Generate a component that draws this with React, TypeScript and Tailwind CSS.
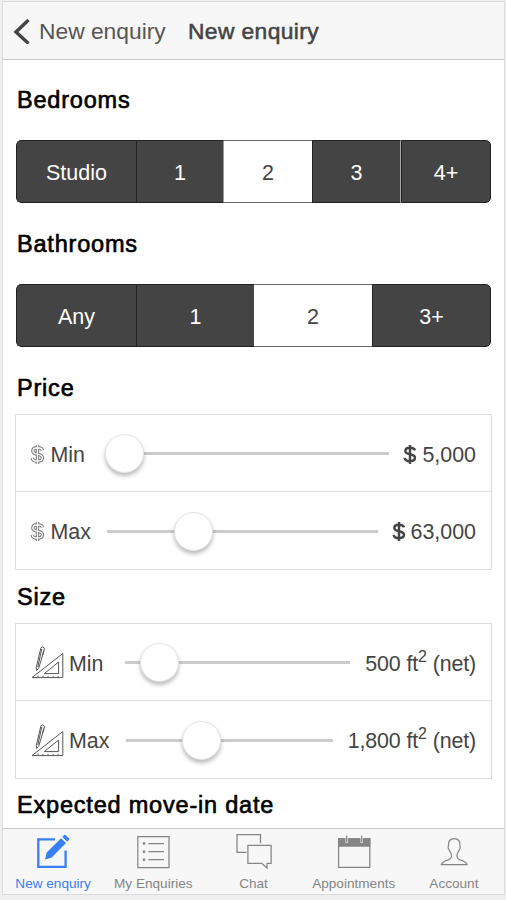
import type { ReactNode } from 'react';

function Heading({ children, className }: { children: ReactNode; className: string }) {
  return (
    <h2
      className={`shrink-0 whitespace-nowrap pl-[14px] text-[23.5px] leading-[30px] tracking-[0.8px] text-black [-webkit-text-stroke:0.65px_#000] ${className}`}
    >
      {children}
    </h2>
  );
}

type Segment = { label: string; width: string; active?: boolean };

function Segments({ items, className }: { items: Segment[]; className: string }) {
  return (
    <div className={`ml-[13px] flex h-[63px] w-[475px] shrink-0 overflow-hidden rounded-[5px] text-[21.5px] ${className}`}>
      {items.map((s, i) => (
        <button
          key={s.label}
          className={`flex items-center justify-center border-y pt-[3px] ${s.width} ${
            s.active ? 'border-[#666] bg-white text-[#444]' : 'border-[#222] bg-[#444] text-white'
          } ${i === 0 ? 'rounded-l-[5px] border-l' : ''} ${i === items.length - 1 ? 'rounded-r-[5px] border-r' : ''} ${
            i > 0 && !s.active ? 'border-l' : ''
          }`}
        >
          {s.label}
        </button>
      ))}
    </div>
  );
}

const dollarPath = 'M12 6.2C11.6 4.4 9.8 3.6 7.2 3.6C4.6 3.6 2.7 4.6 2.7 6.7C2.7 8.7 4.5 9.4 7.2 9.9C10 10.4 12 11.2 12 13.4C12 15.6 9.9 16.7 7.2 16.7C4.3 16.7 2.3 15.6 2.1 13.5M7.2 1V19.4';

function OutlineDollar() {
  return (
    <svg className="mt-[2px] h-[21px] w-[15px] shrink-0" viewBox="0 0 14.4 20.4" fill="none">
      <path d={dollarPath} stroke="#777" strokeWidth="3.3" />
      <path d={dollarPath} stroke="#fff" strokeWidth="1.3" />
    </svg>
  );
}

function SolidDollar() {
  return (
    <svg className="mr-[4px] -mt-px h-[21px] w-[16px] shrink-0" viewBox="0 0 14.4 20.4" fill="none">
      <path d={dollarPath} stroke="#444" strokeWidth="2.4" />
    </svg>
  );
}

function RulerIcon() {
  return (
    <svg className="h-[34px] w-[34px] shrink-0" viewBox="30 644 34 34" fill="none" stroke="#555" strokeWidth="1">
      <path d="M32 676.6L62.8 652.5V676.6Z" />
      <path d="M44.3 672.6L58.6 661V672.6Z" />
      <path d="M38 676.5v-2M43 676.5v-1.6M48 676.5v-1.6M53 676.5v-1.6M58 676.5v-1.6" />
      <path d="M36.3 666.5L40.8 647.2Q41.5 645.3 43.2 646Q44.8 646.8 44.2 649L38.6 667.5L36.5 669.5Z" />
      <path d="M41.8 648L37.8 666M43.9 649.5L42.6 654" />
    </svg>
  );
}

type SliderProps = { track: string; offset: string };

function Slider({ track, offset }: SliderProps) {
  return (
    <div className={`relative mt-px flex h-[39px] shrink-0 items-center ${track}`}>
      <div className="h-[3px] w-full bg-[#cbcbcb]" />
      <div
        className={`absolute top-0 size-[39px] rounded-full border border-[#e4e4e4] bg-white shadow-[0_3px_4px_rgba(0,0,0,0.27)] ${offset}`}
      />
    </div>
  );
}

function Row({ icon, label, value, ...slider }: { icon: ReactNode; label: ReactNode; value: ReactNode } & SliderProps) {
  return (
    <div className="flex h-[77px] items-center pl-[14px] pr-[15px] text-[21.4px] text-[#444]">
      {icon}
      {label}
      <Slider {...slider} />
      <div className="ml-auto flex items-center whitespace-nowrap pt-[4px]">{value}</div>
    </div>
  );
}

function Area({ amount }: { amount: string }) {
  return (
    <span className="tracking-[-0.13px]">
      {amount} ft<span className="relative -top-[9px] text-[16px] leading-none">2</span> (net)
    </span>
  );
}

function Card({ children, className }: { children: ReactNode; className: string }) {
  return (
    <div
      className={`ml-3 h-[156px] w-[477px] shrink-0 divide-y divide-[#ddd] border border-[#ddd] ${className}`}
    >
      {children}
    </div>
  );
}

function Tab({ label, view, active, children }: { label: string; view: string; active?: boolean; children: ReactNode }) {
  return (
    <button className={`flex flex-1 flex-col items-center pt-[3px] ${active ? 'text-[#387ef5]' : 'text-[#858585]'}`}>
      <svg className="h-[38px] w-10" viewBox={view} fill="none" stroke="currentColor" strokeWidth="1.25">
        {children}
      </svg>
      <span className="mt-[4px] whitespace-nowrap text-[13.6px] leading-5">{label}</span>
    </button>
  );
}

export default function App() {
  return (
    <div className="h-[900px] w-[506px] overflow-hidden bg-[#efefef] pl-[2px] pt-px font-['Liberation_Sans',Arial,sans-serif]">
      <div className="flex h-[894px] w-[503px] flex-col border border-[#dcdcdc] bg-white">
        <header className="flex h-[58px] shrink-0 items-center border-b border-[#c8c8c8] bg-[#f7f7f7] text-[#444]">
          <svg className="ml-[10px] h-[26px] w-[18px]" viewBox="13 17 18 26" fill="none" stroke="#444" strokeWidth="3.4">
            <path d="M28.5 19L16 31L28.5 42.5" />
          </svg>
          <span className="ml-[8px] w-[149px] whitespace-nowrap pt-px text-[22.8px] text-[#555]">New enquiry</span>
          <h1 className="whitespace-nowrap pt-px text-[22.8px] tracking-[0.4px] [-webkit-text-stroke:0.55px_#444]">
            New enquiry
          </h1>
        </header>

        <main className="flex h-[768px] shrink-0 flex-col overflow-hidden">
          <Heading className="mt-[25px]">Bedrooms</Heading>
          <Segments
            className="mt-[25px]"
            items={[
              { label: 'Studio', width: 'w-[120px]' },
              { label: '1', width: 'w-[88px] border-r border-r-[#999]' },
              { label: '2', width: 'w-[88px]', active: true },
              { label: '3', width: 'w-[89px] border-r border-r-[#aaa]' },
              { label: '4+', width: 'w-[90px]' },
            ]}
          />
          <Heading className="mt-[26px]">Bathrooms</Heading>
          <Segments
            className="mt-[25px]"
            items={[
              { label: 'Any', width: 'w-[120px]' },
              { label: '1', width: 'w-[118px]' },
              { label: '2', width: 'w-[118px]', active: true },
              { label: '3+', width: 'w-[119px]' },
            ]}
          />
          <Heading className="mt-[26px]">Price</Heading>
          <Card className="mt-[11px]">
            <Row
              icon={<OutlineDollar />}
              label={<span className="w-[61px] pl-[5.5px] pt-[4px]">Min</span>}
              track="w-[283px]"
              offset="-left-[1px]"
              value={<><SolidDollar />5,000</>}
            />
            <Row
              icon={<OutlineDollar />}
              label={<span className="w-[62px] pl-[5.5px] pt-[4px]">Max</span>}
              track="w-[271px]"
              offset="left-[67px]"
              value={<><SolidDollar />63,000</>}
            />
          </Card>
          <Heading className="mt-[12px]">Size</Heading>
          <Card className="mt-[11px]">
            <Row
              icon={<RulerIcon />}
              label={<span className="w-[61px] pl-[5px] pt-[4px]">Min</span>}
              track="w-[225px]"
              offset="left-[15px]"
              value={<Area amount="500" />}
            />
            <Row
              icon={<RulerIcon />}
              label={<span className="w-[62px] pl-[5px] pt-[4px]">Max</span>}
              track="w-[207px]"
              offset="left-[56px]"
              value={<Area amount="1,800" />}
            />
          </Card>
          <Heading className="mt-[11px]">Expected move-in date</Heading>
        </main>

        <nav className="flex h-[66px] shrink-0 border-t border-[#c8c8c8] bg-[#f7f7f7]">
          <Tab label="New enquiry" view="33 832 40 38" active>
            <path d="M55 839.3H38.3V866.8H65.6V850.5" strokeWidth="2.3" />
            <path
              d="M45 859.5L46.7 852.6L61 838.2L66 843.1L51.4 857.7ZM62.3 836.8L64.2 835.1Q65 834.6 65.8 835.2L68.9 838.2Q69.6 839 69 839.8L67.3 841.8Z"
              fill="currentColor"
              stroke="none"
            />
          </Tab>
          <Tab label="My Enquiries" view="133 832 40 38">
            <path d="M137.8 836.5H169V867.5H137.8ZM148.3 843.5H164M148.3 851.7H164M148.3 859.7H164" />
            <path d="M142.8 843.5h2.4M142.8 851.7h2.4M142.8 859.7h2.4" strokeWidth="2.4" />
          </Tab>
          <Tab label="Chat" view="233.5 832 40 38">
            <path d="M246 852.4H236.5V834.6H260V843.2" />
            <path d="M247.4 845.4H270.6V863.3H266.5V868L261.2 863.3H247.4Z" />
          </Tab>
          <Tab label="Appointments" view="334 832 40 38">
            <path d="M338.6 838.8H369.8V867.4H338.6Z" />
            <path d="M338.6 838.8H369.8V846H338.6Z" fill="currentColor" />
            <path d="M346.7 838V842.8M361.7 838V842.8" stroke="#f7f7f7" strokeWidth="2.4" />
            <path d="M346.7 835.6V842M361.7 835.6V842" />
          </Tab>
          <Tab label="Account" view="434 832 40 38">
            <path d="M454.2 838.7C450 838.7 448.2 841.3 448.5 845.2C447.8 846.8 448.3 849 449.3 850.2C450 852.4 451.7 853.3 451.5 856C451.4 858.4 450.2 859.3 447.5 860.2C443.7 861.4 442 862.3 441.3 864.7H467.1C466.4 862.3 464.7 861.4 460.9 860.2C458.2 859.3 457 858.4 456.9 856C456.7 853.3 458.4 852.4 459.1 850.2C460.1 849 460.6 846.8 459.9 845.2C460.2 841.3 458.4 838.7 454.2 838.7Z" />
          </Tab>
        </nav>
      </div>
    </div>
  );
}
